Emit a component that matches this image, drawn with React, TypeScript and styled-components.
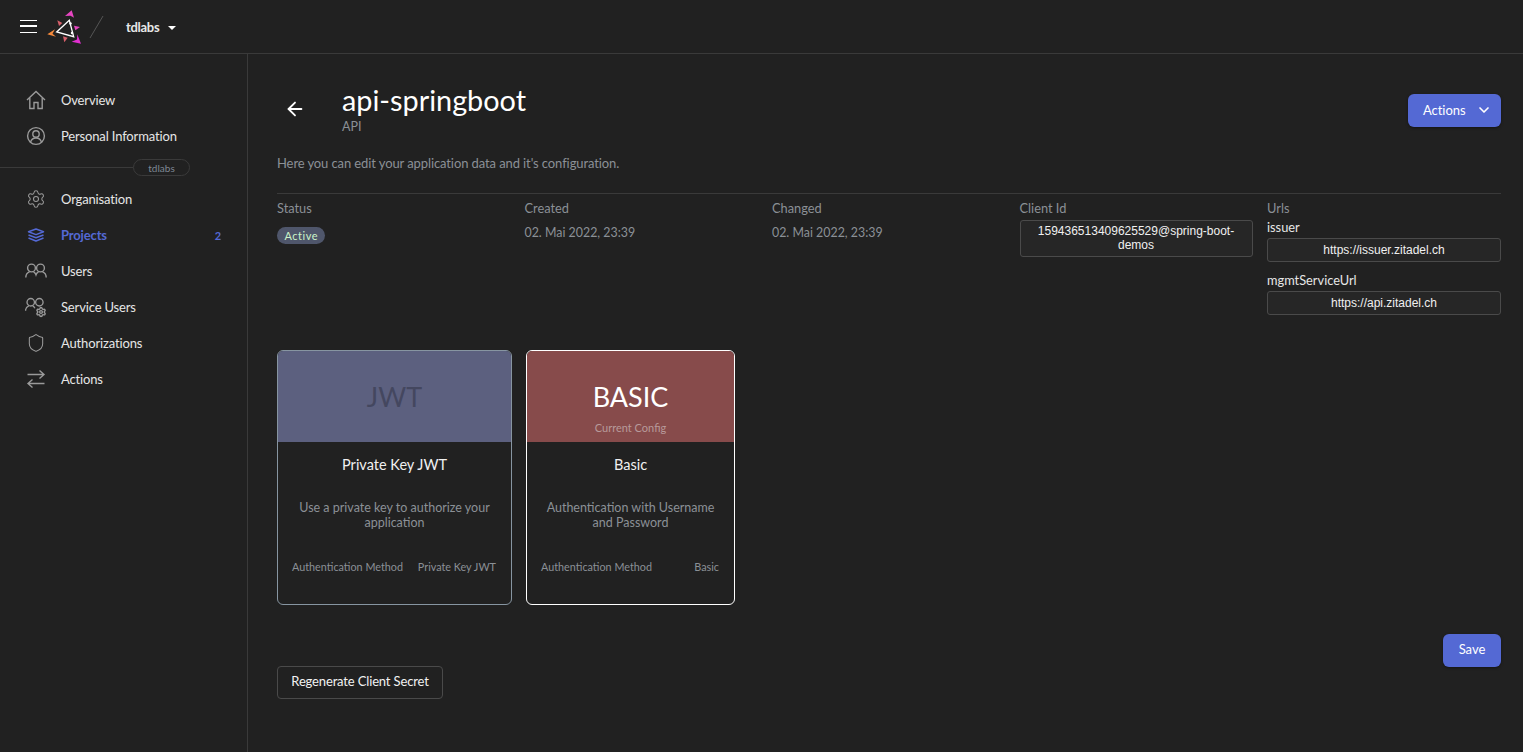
import React from 'react';
import styled, { createGlobalStyle } from 'styled-components';
import { ChevronDown, Settings, Shield, ArrowLeft } from 'lucide-react';

const GlobalStyle = createGlobalStyle`
  html, body {
    margin: 0;
    padding: 0;
    background: #212121;
    color: #fff;
    font-family: 'Lato', sans-serif;
    height: 100%;
    overflow: hidden;
  }
`;

const Page = styled.div`
  width: 1523px;
  height: 752px;
  display: flex;
  flex-direction: column;
`;

const Header = styled.header`
  height: 54px;
  box-sizing: border-box;
  flex: none;
  display: flex;
  align-items: center;
  padding-left: 20px;
  border-bottom: 1px solid #3a3a3a;
`;

const Burger = styled.div`
  width: 17px;
  height: 13px;
  border-top: 1.5px solid #fff;
  border-bottom: 1.5px solid #fff;
  position: relative;
  box-sizing: border-box;
  &::after {
    content: '';
    position: absolute;
    left: 0;
    right: 0;
    top: 4.25px;
    height: 1.5px;
    background: #fff;
  }
`;

const LogoSvg = styled.svg`
  margin-left: 9px;
  flex: none;
`;

const Slash = styled.svg`
  margin-left: 7px;
  flex: none;
`;

const OrgName = styled.span`
  margin-left: 21px;
  font-size: 13px;
  font-weight: 700;
  letter-spacing: -0.3px;
  color: #e8e8e8;
`;

const Caret = styled.span`
  margin-left: 9px;
  margin-top: 2px;
  border-left: 4.5px solid transparent;
  border-right: 4.5px solid transparent;
  border-top: 4.5px solid #fff;
`;

const Body = styled.div`
  flex: 1;
  display: flex;
  min-height: 0;
`;

const Sidebar = styled.nav`
  width: 248px;
  box-sizing: border-box;
  flex: none;
  border-right: 1px solid #3a3a3a;
  padding-top: 28px;
`;

const NavItem = styled.div<{ $active?: boolean }>`
  height: 36px;
  display: flex;
  align-items: center;
  padding: 0 26px 0 25px;
  font-size: 13px;
  letter-spacing: -0.15px;
  font-weight: ${(p) => (p.$active ? 700 : 400)};
  color: ${(p) => (p.$active ? '#5469d4' : '#e6e6e6')};
`;

const NavIcon = styled.span<{ $active?: boolean }>`
  width: 22px;
  height: 22px;
  margin-right: 14px;
  display: flex;
  align-items: center;
  justify-content: center;
  color: ${(p) => (p.$active ? '#5469d4' : '#9a9a9a')};
`;

const NavCount = styled.span`
  margin-left: auto;
  font-size: 11px;
`;

const OrgDivider = styled.div`
  display: flex;
  align-items: center;
  margin: 5px 0;
`;

const DividerLine = styled.div`
  width: 133px;
  height: 1px;
  background: #3a3a3a;
`;

const OrgPill = styled.span`
  width: 57px;
  height: 17px;
  box-sizing: border-box;
  border: 1px solid #3a3a3a;
  border-radius: 9px;
  font-size: 10px;
  line-height: 16px;
  text-align: center;
  color: #7f8894;
`;

const Main = styled.main`
  flex: 1;
  padding: 0 22px 0 29px;
  min-width: 0;
`;

const TitleRow = styled.div`
  display: flex;
  align-items: flex-start;
  box-sizing: border-box;
  padding-top: 27px;
  height: 101px;
`;

const BackButton = styled.div`
  width: 36px;
  margin-top: 17px;
  margin-right: 29px;
  display: flex;
  justify-content: center;
  color: #fff;
`;

const TitleBlock = styled.div`
  flex: 1;
`;

const Title = styled.h1`
  margin: 0;
  font-size: 28.8px;
  line-height: 38px;
  font-weight: 400;
  color: #fff;
`;

const Subtitle = styled.div`
  font-size: 12.5px;
  line-height: 14px;
  color: #8b9096;
  margin-top: 1px;
`;

const PrimaryButton = styled.button`
  border: none;
  background: #5469d4;
  color: #fff;
  font-family: 'Lato', sans-serif;
  font-size: 13px;
  border-radius: 6px;
  padding: 0;
  box-shadow: 0 1px 3px rgba(0, 0, 0, 0.4);
`;

const ActionsButton = styled(PrimaryButton)`
  width: 93px;
  height: 33px;
  margin-top: 13px;
  display: flex;
  align-items: center;
  padding: 0 0 1px 15px;
  gap: 10px;
  letter-spacing: -0.05px;
`;

const SaveButton = styled(PrimaryButton)`
  width: 58px;
  height: 33px;
  padding-bottom: 3px;
`;

const Description = styled.p`
  margin: 0;
  font-size: 13px;
  line-height: 16px;
  letter-spacing: -0.1px;
  color: #8b9096;
  height: 39px;
  box-sizing: border-box;
  border-bottom: 1px solid #3a3a3a;
`;

const Meta = styled.div`
  display: grid;
  grid-template-columns: repeat(5, 234px);
  column-gap: 13.5px;
  height: 156px;
  padding-top: 7px;
  box-sizing: border-box;
`;

const MetaColumn = styled.div`
  display: flex;
  flex-direction: column;
  align-items: flex-start;
`;

const MetaLabel = styled.div`
  font-size: 12.8px;
  line-height: 14px;
  color: #8b9096;
`;

const MetaValue = styled.div`
  font-size: 12.4px;
  line-height: 14px;
  color: #8b9096;
  margin-top: 11px;
`;

const StatusPill = styled.span`
  margin-top: 12px;
  height: 17px;
  padding: 0 7.5px;
  border-radius: 9px;
  background: #4f566b;
  color: #cbf4c9;
  font-size: 11px;
  line-height: 17px;
  letter-spacing: 0.5px;
`;

const CopyBox = styled.div<{ $tall?: boolean }>`
  width: ${(p) => (p.$tall ? 'calc(100% - 1px)' : '100%')};
  box-sizing: border-box;
  margin-top: ${(p) => (p.$tall ? '5px' : '0')};
  background: #262626;
  border: 1px solid #4a4a4a;
  border-radius: 3px;
  font-family: 'Liberation Sans', Arial, sans-serif;
  font-size: 12px;
  line-height: 14px;
  text-align: center;
  color: #f0f0f0;
  padding: ${(p) => (p.$tall ? '3px 8px 4px' : '4px 8px')};
`;

const UrlLabel = styled.div`
  font-size: 12.8px;
  line-height: 14px;
  color: #e6e6e6;
  margin-top: 5px;
  margin-bottom: 3.5px;
`;

const UrlGap = styled.div`
  height: 6.5px;
`;

const Cards = styled.div`
  display: flex;
  gap: 14px;
`;

const Card = styled.div<{ $width: number; $border: string }>`
  width: ${(p) => p.$width}px;
  height: 255px;
  box-sizing: border-box;
  border: 1px solid ${(p) => p.$border};
  border-radius: 6px;
  overflow: hidden;
  display: flex;
  flex-direction: column;
`;

const CardBanner = styled.div<{ $bg: string }>`
  height: 91px;
  flex: none;
  background: ${(p) => p.$bg};
  display: flex;
  flex-direction: column;
  align-items: center;
`;

const BannerText = styled.div<{ $color: string }>`
  font-size: 27px;
  line-height: 34px;
  margin-top: 29px;
  color: ${(p) => p.$color};
`;

const BannerNote = styled.div`
  font-size: 11px;
  line-height: 12px;
  margin-top: 8px;
  color: #b79a9a;
`;

const CardTitle = styled.div`
  font-size: 14.5px;
  line-height: 18px;
  text-align: center;
  margin-top: 14px;
  color: #f0f0f0;
`;

const CardText = styled.div`
  font-size: 12.5px;
  line-height: 15px;
  text-align: center;
  color: #8b9096;
  margin-top: 26px;
  padding: 0 14px;
  height: 30px;
`;

const CardFoot = styled.div`
  display: flex;
  justify-content: space-between;
  font-size: 10.8px;
  line-height: 14px;
  color: #8b9096;
  padding: 0 15px 0 14px;
  margin-top: 30px;
`;

const SaveRow = styled.div`
  display: flex;
  justify-content: flex-end;
  margin-top: 29px;
`;

const OutlineButton = styled.button`
  display: block;
  width: 166px;
  height: 33px;
  margin-top: -1px;
  padding: 0 0 3px;
  background: transparent;
  border: 1px solid #4a4a4a;
  border-radius: 4px;
  color: #f2f2f2;
  font-family: 'Lato', sans-serif;
  font-size: 13px;
  letter-spacing: -0.15px;
`;

const HomeIcon = () => (
  <svg width="20" height="20" viewBox="0 0 20 20" fill="none" stroke="currentColor" strokeWidth="1.4">
    <path d="M1 10 L10 1.5 L19 10" />
    <path d="M3.800 8v10.500h4.200v-6h4v6h4.200V8" />
  </svg>
);

const PersonIcon = () => (
  <svg width="20" height="20" viewBox="0 0 20 20" fill="none" stroke="currentColor" strokeWidth="1.4">
    <circle cx="10" cy="10" r="8.400" />
    <circle cx="10" cy="8" r="3.200" />
    <path d="M4.600 16.200c.6-2.800 2.600-4.200 5.400-4.200s4.800 1.400 5.400 4.200" />
  </svg>
);

const LayersIcon = () => (
  <svg width="18" height="14" viewBox="0 0 18 14" fill="none" stroke="currentColor" strokeWidth="1.500" strokeLinejoin="round">
    <path d="M9 1 L16.500 3.800 L9 6.600 L1.500 3.800Z" />
    <path d="M1.500 7 L9 9.800 L16.500 7" />
    <path d="M1.500 10 L9 13 L16.500 10" />
  </svg>
);

const UsersIcon = () => (
  <svg width="22" height="16" viewBox="0 0 22 16" fill="none" stroke="currentColor" strokeWidth="1.400">
    <circle cx="6.500" cy="5" r="3.900" />
    <circle cx="15.500" cy="5" r="3.900" />
    <path d="M.8 14.500C.8 11.500 2.600 9.500 4.500 8.800M8.500 8.800c1 .4 2 1.500 2.500 3 .5-1.500 1.500-2.600 2.500-3M17.500 8.800c1.900.7 3.700 2.700 3.700 5.700" />
  </svg>
);

const ServiceUsersIcon = () => (
  <svg width="23" height="21" viewBox="0 0 23 21" fill="none" stroke="currentColor" strokeWidth="1.400">
    <circle cx="6" cy="5" r="3.900" />
    <circle cx="15" cy="5" r="3.900" />
    <path d="M.6 14C.6 11.500 2.200 9.500 4 8.800M8 8.800c1 .4 1.800 1.300 2.300 2.500" />
    <Settings x={11} y={9.500} width={11.500} height={11.500} strokeWidth={3} />
  </svg>
);

const SwapIcon = () => (
  <svg width="20" height="18" viewBox="0 0 20 18" fill="none" stroke="currentColor" strokeWidth="1.400">
    <path d="M1.500 4.500H18M13.500 .5L18 4.500L13.500 8.500" />
    <path d="M18.500 13.500H2M6.500 9.500L2 13.500L6.500 17.500" />
  </svg>
);

const Logo = () => (
  <LogoSvg width="36" height="36" viewBox="46 8 36 36" fill="none">
    <path d="M69.300 19.300 L56.700 31 L73.700 35.700 Z" stroke="#fff" strokeWidth="1.300" />
    <circle cx="70.500" cy="22.500" r="1.200" fill="#fff" />
    <circle cx="72" cy="32" r="1.200" fill="#fff" />
    <path d="M65 15 L71.700 9.300 L74 16.700 L70.500 14.800Z" fill="#e545c0" />
    <path d="M55 28.300 L47.300 33.300 L56 35.700 L52.500 32.800Z" fill="#f58a3c" />
    <path d="M77.300 33.300 L81 42.700 L71.700 40.700 L77 38.500Z" fill="#e02fd0" />
    <path d="M57.300 19.300 L62.300 22 L59 25Z" fill="#d65f6a" />
    <path d="M74 24.700 L80 26 L75.300 29.300Z" fill="#e545c0" />
    <path d="M63 35.300 L67.700 36.700 L64.300 41.300Z" fill="#d65f6a" />
  </LogoSvg>
);

const navTop = [
  { label: 'Overview', icon: <HomeIcon /> },
  { label: 'Personal Information', icon: <PersonIcon /> },
];

const navOrg = [
  { label: 'Organisation', icon: <Settings size={20} strokeWidth={1.25} /> },
  { label: 'Projects', icon: <LayersIcon />, active: true, count: 2 },
  { label: 'Users', icon: <UsersIcon /> },
  { label: 'Service Users', icon: <ServiceUsersIcon /> },
  { label: 'Authorizations', icon: <Shield size={20} strokeWidth={1.25} /> },
  { label: 'Actions', icon: <SwapIcon /> },
];

type NavEntry = { label: string; icon: React.ReactNode; active?: boolean; count?: number };

const NavRow = ({ label, icon, active, count }: NavEntry) => (
  <NavItem $active={active}>
    <NavIcon $active={active}>{icon}</NavIcon>
    {label}
    {count ? <NavCount>{count}</NavCount> : null}
  </NavItem>
);

const App = () => (
  <Page>
    <GlobalStyle />
    <Header>
      <Burger />
      <Logo />
      <Slash width="16" height="24" viewBox="0 0 16 24">
        <path d="M1 23 L14 1" stroke="#555" strokeWidth="1" />
      </Slash>
      <OrgName>tdlabs</OrgName>
      <Caret />
    </Header>
    <Body>
      <Sidebar>
        {navTop.map((n) => (
          <NavRow key={n.label} {...n} />
        ))}
        <OrgDivider>
          <DividerLine />
          <OrgPill>tdlabs</OrgPill>
        </OrgDivider>
        {navOrg.map((n) => (
          <NavRow key={n.label} {...n} />
        ))}
      </Sidebar>
      <Main>
        <TitleRow>
          <BackButton>
            <ArrowLeft size={22} strokeWidth={2} />
          </BackButton>
          <TitleBlock>
            <Title>api-springboot</Title>
            <Subtitle>API</Subtitle>
          </TitleBlock>
          <ActionsButton>
            Actions
            <ChevronDown size={16} strokeWidth={2.5} />
          </ActionsButton>
        </TitleRow>
        <Description>Here you can edit your application data and it's configuration.</Description>
        <Meta>
          <MetaColumn>
            <MetaLabel>Status</MetaLabel>
            <StatusPill>Active</StatusPill>
          </MetaColumn>
          <MetaColumn>
            <MetaLabel>Created</MetaLabel>
            <MetaValue>02. Mai 2022, 23:39</MetaValue>
          </MetaColumn>
          <MetaColumn>
            <MetaLabel>Changed</MetaLabel>
            <MetaValue>02. Mai 2022, 23:39</MetaValue>
          </MetaColumn>
          <MetaColumn>
            <MetaLabel>Client Id</MetaLabel>
            <CopyBox $tall>159436513409625529@spring-boot-demos</CopyBox>
          </MetaColumn>
          <MetaColumn>
            <MetaLabel>Urls</MetaLabel>
            <UrlLabel>issuer</UrlLabel>
            <CopyBox>https://issuer.zitadel.ch</CopyBox>
            <UrlGap />
            <UrlLabel>mgmtServiceUrl</UrlLabel>
            <CopyBox>https://api.zitadel.ch</CopyBox>
          </MetaColumn>
        </Meta>
        <Cards>
          <Card $width={235} $border="#8795a1">
            <CardBanner $bg="#5c607f">
              <BannerText $color="#44475f">JWT</BannerText>
            </CardBanner>
            <CardTitle>Private Key JWT</CardTitle>
            <CardText>Use a private key to authorize your application</CardText>
            <CardFoot>
              <span>Authentication Method</span>
              <span>Private Key JWT</span>
            </CardFoot>
          </Card>
          <Card $width={209} $border="#ffffff">
            <CardBanner $bg="#874b4b">
              <BannerText $color="#ffffff">BASIC</BannerText>
              <BannerNote>Current Config</BannerNote>
            </CardBanner>
            <CardTitle>Basic</CardTitle>
            <CardText>Authentication with Username and Password</CardText>
            <CardFoot>
              <span>Authentication Method</span>
              <span>Basic</span>
            </CardFoot>
          </Card>
        </Cards>
        <SaveRow>
          <SaveButton>Save</SaveButton>
        </SaveRow>
        <OutlineButton>Regenerate Client Secret</OutlineButton>
      </Main>
    </Body>
  </Page>
);

export default App;
